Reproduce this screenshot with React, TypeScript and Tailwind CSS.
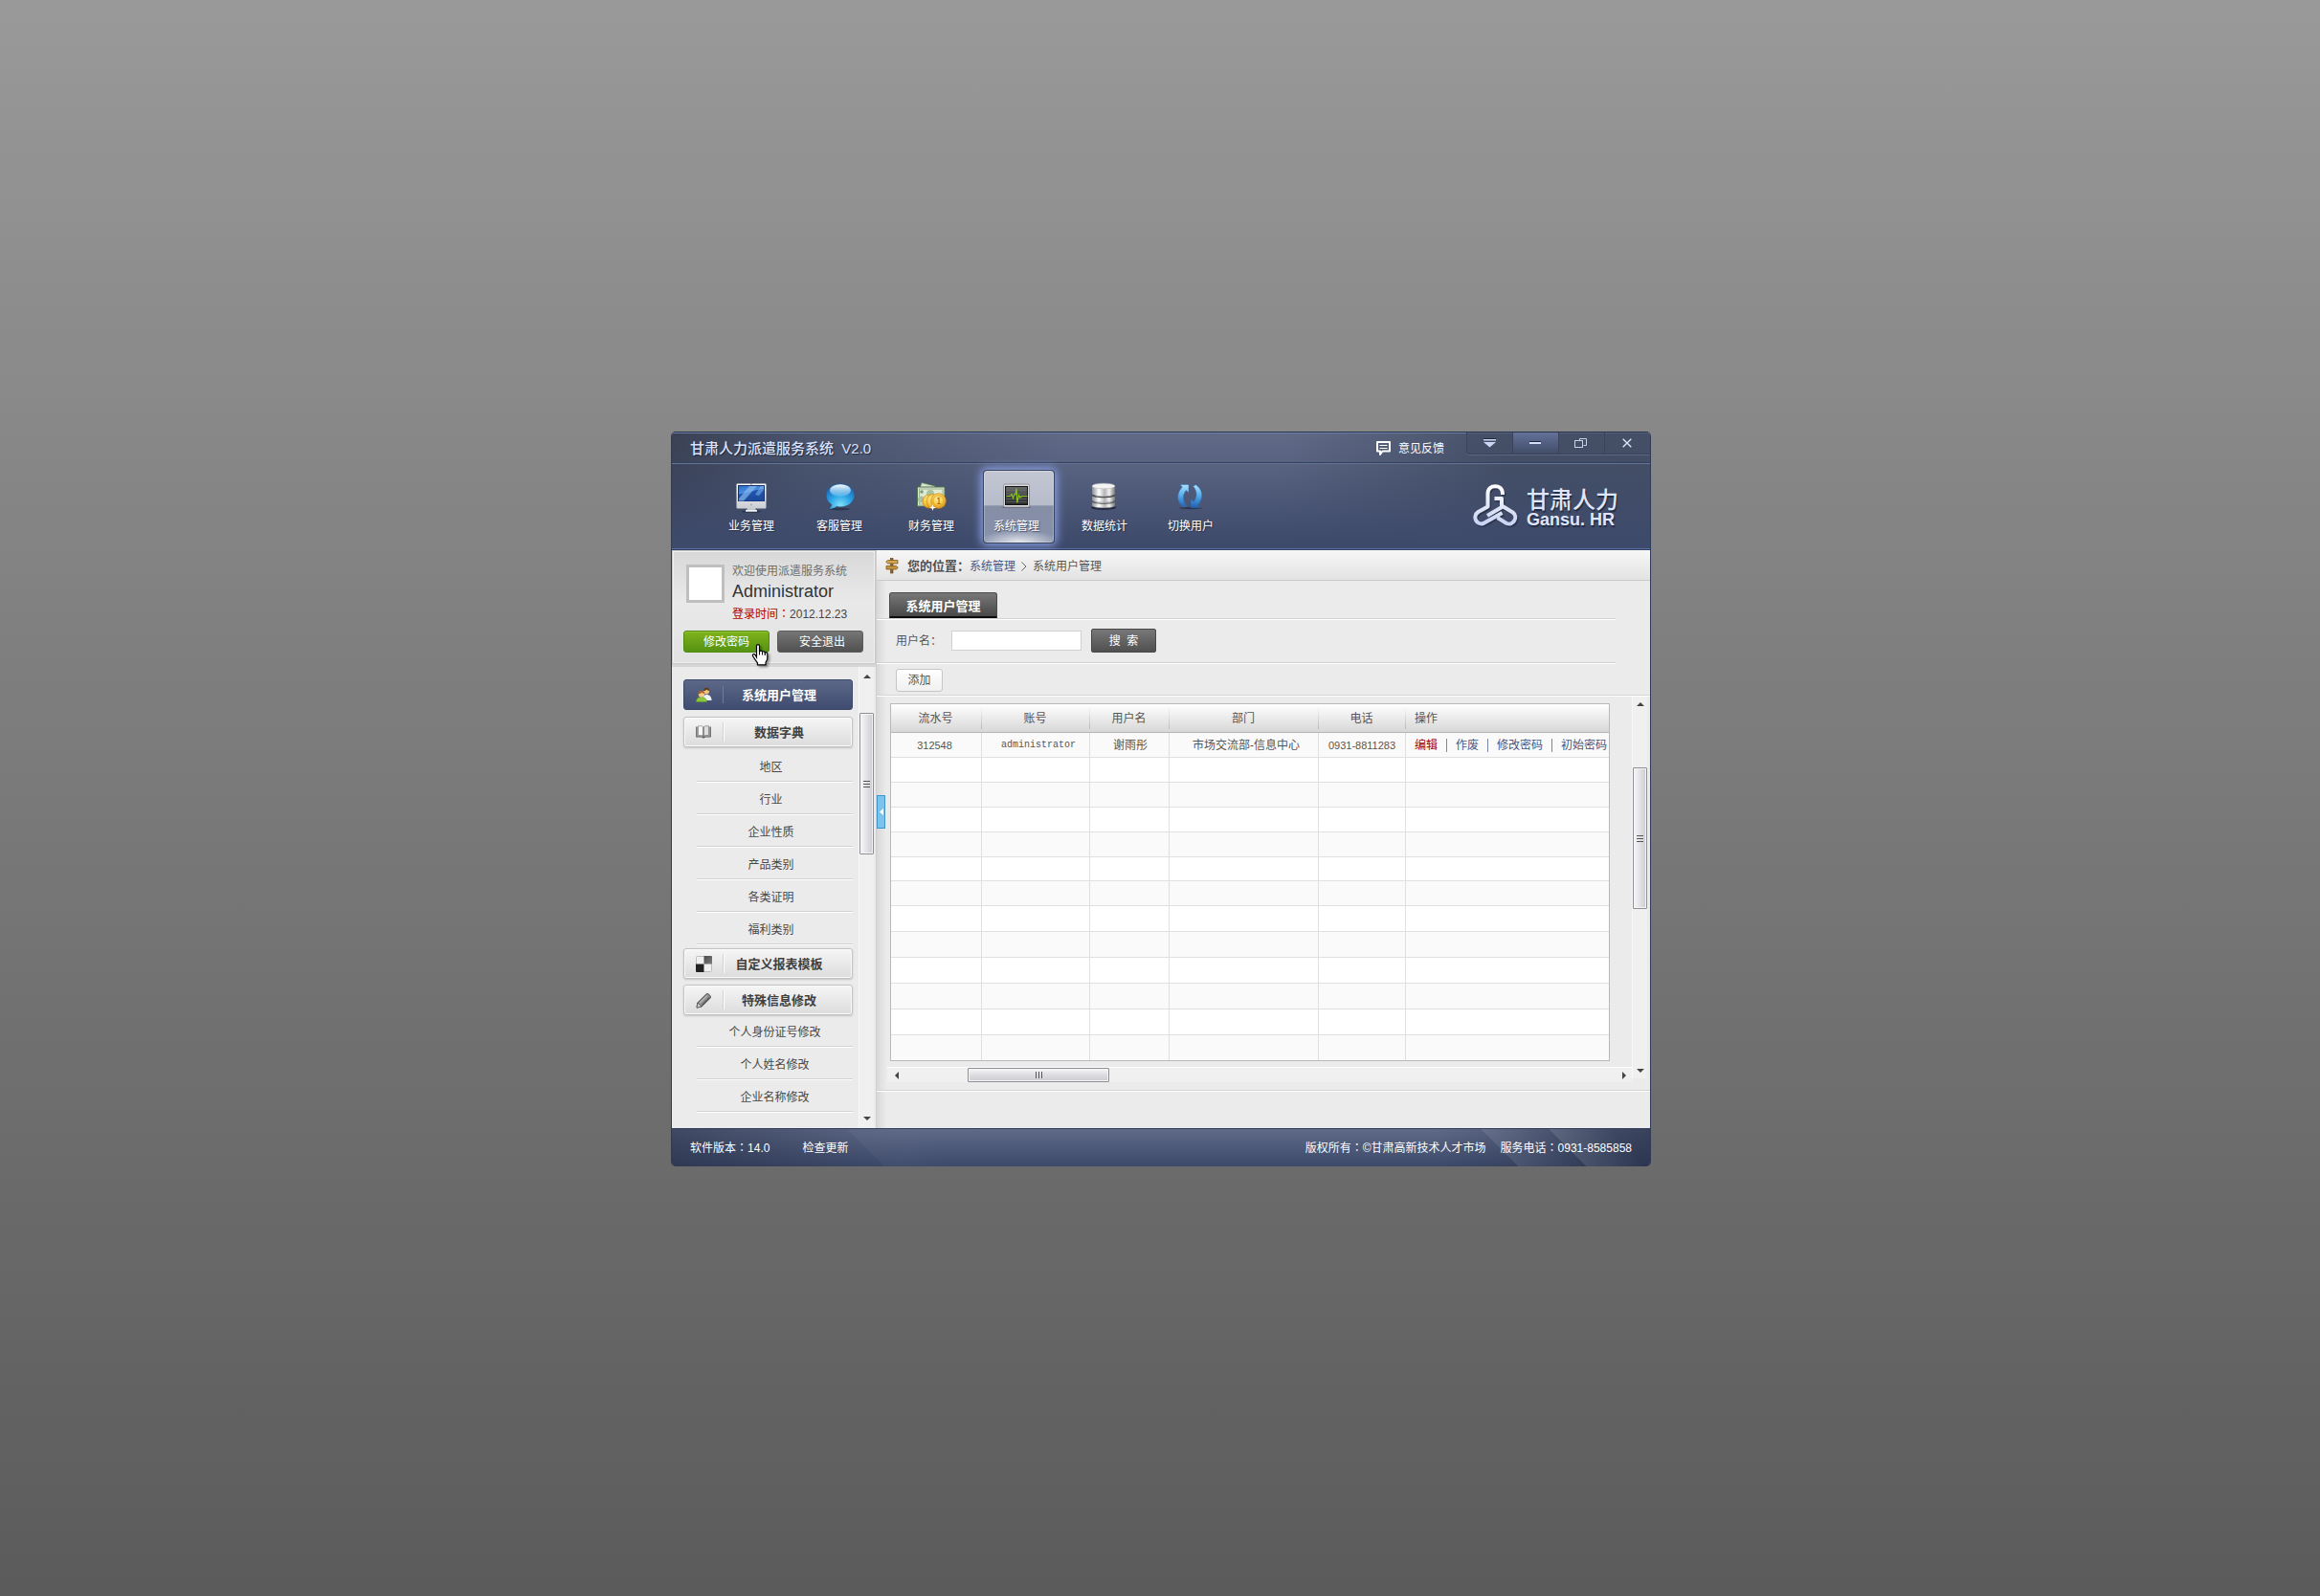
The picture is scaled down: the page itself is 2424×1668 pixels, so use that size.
import React from 'react';

function MonitorIcon() {
  return (
    <svg width="32" height="32" viewBox="0 0 32 32" aria-hidden="true">
      <defs>
        <linearGradient id="mo-s" x1="0" y1="0" x2="0.4" y2="1">
          <stop offset="0" stopColor="#2f6cc4" />
          <stop offset="0.45" stopColor="#4b8fe0" />
          <stop offset="0.5" stopColor="#1f56b0" />
          <stop offset="1" stopColor="#1c4a9c" />
        </linearGradient>
        <linearGradient id="mo-c" x1="0" y1="0" x2="0" y2="1">
          <stop offset="0" stopColor="#ffffff" />
          <stop offset="1" stopColor="#c9ccd1" />
        </linearGradient>
      </defs>
      <ellipse cx="16" cy="30.6" rx="10" ry="1.2" fill="#1c2338" opacity="0.6" />
      <path d="M12 27h8l1.5 3.5h-11z" fill="#c4c8cf" />
      <rect x="10" y="29" width="12" height="1.6" fill="#f1f2f4" />
      <rect x="0.5" y="1.5" width="31" height="26" rx="1" fill="url(#mo-c)" />
      <rect x="2" y="3" width="28" height="17" fill="#17316e" />
      <rect x="3" y="4" width="26" height="15.5" fill="url(#mo-s)" />
      <path d="M3 17L14 4h8L8 19.500H3z" fill="#8fc0f3" opacity="0.65" />
      <path d="M20 13l6-9h3v4l-5 6z" fill="#8fc0f3" opacity="0.5" />
      <circle cx="16" cy="23.500" r="1" fill="#a3a7ad" />
      <rect x="15.500" y="1.500" width="1" height="1" fill="#222" />
    </svg>
  );
}

function BubbleIcon() {
  return (
    <svg width="32" height="32" viewBox="0 0 32 32" aria-hidden="true" className="ml-[2px]">
      <defs>
        <radialGradient id="bu-b" cx="0.5" cy="0.85" r="0.8">
          <stop offset="0" stopColor="#7fe0fb" />
          <stop offset="0.5" stopColor="#2aa3e6" />
          <stop offset="1" stopColor="#1666b4" />
        </radialGradient>
        <linearGradient id="bu-h" x1="0" y1="0" x2="0" y2="1">
          <stop offset="0" stopColor="#ffffff" />
          <stop offset="1" stopColor="#8fd0f5" stopOpacity="0.4" />
        </linearGradient>
      </defs>
      <ellipse cx="15" cy="28" rx="11" ry="1.500" fill="#1c2338" opacity="0.55" />
      <path
        d="M16 1.500c8.200 0 14.500 5.200 14.500 12S24.300 25.500 16.500 25.500c-1.500 0-3-.2-4.300-.6-2.200 1.700-5 2.900-7.700 2.900 1.600-1.300 2.500-2.900 2.700-4.500C3.600 21.200 1.500 17.700 1.500 13.500c0-6.800 6.300-12 14.500-12z"
        fill="url(#bu-b)"
      />
      <ellipse cx="16" cy="8.500" rx="11" ry="6.200" fill="url(#bu-h)" />
    </svg>
  );
}

function MoneyIcon() {
  return (
    <svg width="32" height="32" viewBox="0 0 32 32" aria-hidden="true">
      <defs>
        <radialGradient id="mn-c" cx="0.45" cy="0.35" r="0.7">
          <stop offset="0" stopColor="#fff3a8" />
          <stop offset="0.55" stopColor="#f7c93f" />
          <stop offset="1" stopColor="#d8921a" />
        </radialGradient>
      </defs>
      <path d="M6 .5L20 4l-1 6L4 6z" fill="#d7e6cb" stroke="#5e7d58" strokeWidth="0.8" />
      <rect x="1.500" y="5" width="28.500" height="20" fill="#dfead3" stroke="#53724f" />
      <rect x="3.500" y="7" width="24.500" height="16" fill="none" stroke="#8aa583" strokeWidth="0.800" />
      <circle cx="5.500" cy="18" r="3.500" fill="#a9c19f" />
      <circle cx="15" cy="12" r="4" fill="#a9c19f" />
      <circle cx="6" cy="10" r="1.800" fill="#7f9c78" />
      <ellipse cx="13.500" cy="20" rx="6.500" ry="7" fill="url(#mn-c)" stroke="#c98215" strokeWidth="0.600" />
      <ellipse cx="17.500" cy="20" rx="6.500" ry="7.400" fill="url(#mn-c)" stroke="#c98215" strokeWidth="0.600" />
      <circle cx="23.500" cy="19.500" r="7.800" fill="url(#mn-c)" stroke="#c98215" strokeWidth="0.700" />
      <circle cx="23.500" cy="19.500" r="5.600" fill="none" stroke="#e0a023" strokeWidth="0.900" />
      <path d="M22.300 17.200l1.700-1v6.300m-1.800 0h3.600" fill="none" stroke="#b3730d" strokeWidth="1.200" />
      <path d="M17.500 23l.8 2.700 2.700.8-2.700.8-.8 2.700-.8-2.700-2.700-.8 2.700-.8z" fill="#fff" />
    </svg>
  );
}

function PulseIcon() {
  return (
    <svg width="32" height="32" viewBox="0 0 32 32" aria-hidden="true" className="mr-[4px]">
      <defs>
        <linearGradient id="pu-s" x1="0" y1="0" x2="0" y2="1">
          <stop offset="0" stopColor="#6a6c6d" />
          <stop offset="0.5" stopColor="#434546" />
          <stop offset="1" stopColor="#2b2c2d" />
        </linearGradient>
      </defs>
      <rect x="1.500" y="25" width="29" height="2" rx="1" fill="#4a5268" opacity="0.700" />
      <rect x="2.500" y="2" width="27" height="24" rx="1.500" fill="#d9dadb" stroke="#85878d" strokeWidth="0.800" />
      <rect x="4.500" y="4.500" width="23" height="19" fill="url(#pu-s)" stroke="#141414" />
      <path d="M5 8.500h22M5 12h22M5 17.500h22M5 20.500h22" stroke="#6b6e6f" strokeWidth="0.600" />
      <path
        d="M5.500 14.500h4l1.500-2 1.500 4 1.500-4h1l1-6 .8 15 1.700-8 1.500 2.500 1.500-1.500h6"
        fill="none"
        stroke="#86c31d"
        strokeWidth="1.200"
      />
    </svg>
  );
}

function DatabaseIcon() {
  return (
    <svg width="32" height="32" viewBox="0 0 32 32" aria-hidden="true" className="mr-[3px]">
      <defs>
        <linearGradient id="db-b" x1="0" y1="0" x2="1" y2="0">
          <stop offset="0" stopColor="#8d8d8d" />
          <stop offset="0.3" stopColor="#ffffff" />
          <stop offset="0.55" stopColor="#b5b5b5" />
          <stop offset="0.75" stopColor="#f2f2f2" />
          <stop offset="1" stopColor="#767676" />
        </linearGradient>
      </defs>
      <ellipse cx="16" cy="26.500" rx="13" ry="2.500" fill="#141a2b" opacity="0.700" />
      <g transform="translate(1 0)">
        <path d="M3 20.500v4c0 3 24 3 24 0v-4z" fill="url(#db-b)" />
        <path d="M3 20.500c0 3 24 3 24 0v-1c0 3-24 3-24 0z" fill="#4c4c4c" />
        <path d="M3 14v4.500c0 3 24 3 24 0V14z" fill="url(#db-b)" />
        <path d="M3 14c0 3 24 3 24 0v-1.500c0 3-24 3-24 0z" fill="#4c4c4c" />
        <path d="M3 7v5c0 3 24 3 24 0V7z" fill="url(#db-b)" />
        <path d="M3 7c0 3 24 3 24 0V4c0 3-24 3-24 0z" fill="url(#db-b)" />
        <ellipse cx="15" cy="4" rx="12" ry="2.800" fill="#f4f4f4" stroke="#bdbdbd" strokeWidth="0.600" />
      </g>
    </svg>
  );
}

function SwitchIcon() {
  return (
    <svg width="32" height="32" viewBox="0 0 32 32" aria-hidden="true" className="mr-[3px]">
      <defs>
        <linearGradient id="sw-l" x1="0" y1="0" x2="0" y2="1">
          <stop offset="0" stopColor="#a9e4ff" />
          <stop offset="0.550" stopColor="#4ba2e4" />
          <stop offset="1" stopColor="#1f5fb0" />
        </linearGradient>
      </defs>
      <ellipse cx="17" cy="27" rx="12" ry="1.200" fill="#1b2237" opacity="0.600" />
      <path
        d="M6 2.500h9V11l-2.700-2.400C8.200 13.500 8.700 20 13 25l-3 1.300C2.500 21.500 1.500 12 8.300 5z"
        fill="url(#sw-l)"
        stroke="#2f6fb8"
        strokeWidth="0.500"
      />
      <path
        d="M26.500 26.500h-9V18l2.700 2.400C24.300 15.500 23.800 9 19.500 4l3-1.300C30 7.500 31 17 24.200 24z"
        fill="url(#sw-l)"
        stroke="#2f6fb8"
        strokeWidth="0.500"
      />
    </svg>
  );
}

function LogoMark() {
  return (
    <svg width="48" height="46" viewBox="0 0 48 46" aria-hidden="true">
      <defs>
        <linearGradient id="lg" x1="0" y1="0" x2="0" y2="46" gradientUnits="userSpaceOnUse">
          <stop offset="0" stopColor="#ffffff" />
          <stop offset="1" stopColor="#c3cff2" />
        </linearGradient>
      </defs>
      {[0, 1].map((layer) => (
        <g
          key={layer}
          fill="none"
          stroke={layer === 0 ? '#1d2438' : 'url(#lg)'}
          opacity={layer === 0 ? 0.6 : 1}
          strokeWidth="4"
          strokeLinejoin="round"
          transform={layer === 0 ? 'translate(1.200 1.600)' : undefined}
        >
          <path d="M31 11V10C31 -.5 15.500 -.5 15.500 10V23.500L5.500 29C-1 33.500 3.500 43.500 11 41L30.500 30" />
          <path d="M22.500 15H30V22.500L41.500 29.500C48 34 42 44 35 41L25.500 35" />
          <path d="M15 33L31 23.500" />
        </g>
      ))}
    </svg>
  );
}

function SignpostIcon() {
  return (
    <svg width="14" height="17" viewBox="0 0 14 17" aria-hidden="true">
      <rect x="5.500" y="0.500" width="2.500" height="15.500" fill="#8a6630" stroke="#5d4218" strokeWidth="0.600" />
      <path d="M2.500 2.500h10.500v3.500H2.500L.7 4.250z" fill="#d2a654" stroke="#80591c" strokeWidth="0.800" />
      <path d="M1 8.500h10.500l1.800 1.750-1.800 1.750H1z" fill="#c3943f" stroke="#80591c" strokeWidth="0.800" />
    </svg>
  );
}

function UsersIcon() {
  return (
    <svg width="17" height="16" viewBox="0 0 17 16" aria-hidden="true">
      <path d="M7 14c0-4 2-6 4.500-6s5 2 5 6z" fill="#eef1f5" />
      <circle cx="11" cy="4.500" r="3" fill="#f0c27c" />
      <path d="M8 4c0-4 6-4.500 6.200 0-1.500-.3-2.500-1-3-1.500C10.500 3.500 9.500 4 8 4z" fill="#5b3716" />
      <path d="M.5 15.500c0-3.500 2-5 5-5s6 1.500 6 5z" fill="#8cc63c" stroke="#5f9420" strokeWidth="0.500" />
      <circle cx="6" cy="7.500" r="3.200" fill="#f3c988" />
      <path d="M2.700 7.500c-.2-5 6.700-4.800 6.600-.5-1.500 0-2.500-.8-3-1.500-.8 1-2 1.800-3.600 2z" fill="#a8622a" />
    </svg>
  );
}

function BookIcon() {
  return (
    <svg width="16" height="14" viewBox="0 0 16 14" aria-hidden="true">
      <path d="M.8 1.500v10.500h5.500L8 13l1.700-1h5.500V1.500" fill="#bdbdbd" stroke="#5c5c5c" strokeWidth="1.200" />
      <path d="M2.500.8h3.200C7 .8 8 1.500 8 2.500v9c-.6-.7-1.500-1-2.500-1h-3z" fill="#f6f6f6" stroke="#777" strokeWidth="0.600" />
      <path d="M13.500.8h-3.200C9 .8 8 1.500 8 2.500v9c.6-.7 1.500-1 2.500-1h3z" fill="#dedede" stroke="#6a6a6a" strokeWidth="0.600" />
      <path d="M8 2v10" stroke="#555" strokeWidth="0.800" />
    </svg>
  );
}

function CheckerIcon() {
  return (
    <svg width="17" height="17" viewBox="0 0 17 17" aria-hidden="true">
      <defs>
        <linearGradient id="ck" x1="0" y1="0" x2="1" y2="1">
          <stop offset="0" stopColor="#4a4a4a" />
          <stop offset="1" stopColor="#7d7d7d" />
        </linearGradient>
      </defs>
      <rect x="0.500" y="0.500" width="16" height="16" rx="1" fill="#f0f0f0" stroke="#bcbcbc" />
      <path d="M8.500 0H16a1 1 0 011 1v7.500H8.500z" fill="url(#ck)" />
      <path d="M0 8.500h8.500V17H1a1 1 0 01-1-1z" fill="#222" />
    </svg>
  );
}

function PencilIcon() {
  return (
    <svg width="17" height="17" viewBox="0 0 17 17" aria-hidden="true">
      <path d="M1 16l.8-5L11 1.800C12.500.3 16.700 4.300 15.200 6L6 15.200z" fill="#8c8c8c" stroke="#4d4d4d" />
      <path d="M4 11.500l8-8" stroke="#b5b5b5" strokeWidth="1.500" />
      <path d="M6.500 13.500l8-8" stroke="#5c5c5c" strokeWidth="1.200" />
      <path d="M2 11l4 4-5 1.200z" fill="#d0d0d0" stroke="#4d4d4d" strokeWidth="0.700" />
    </svg>
  );
}

function HandCursor() {
  return (
    <svg width="18" height="23" viewBox="0 0 18 23" aria-hidden="true" className="drop-shadow-[2px_2px_1px_rgba(0,0,0,0.35)]">
      <path
        d="M5.500 14V2.200C5.500.2 8.500.2 8.500 2.200V8c.3-1.400 3-1.200 3 .5.500-1.200 2.800-.9 2.800.8.6-1 2.500-.6 2.500 1v5c0 2-1.800 3-1.800 4.500v2H6.500v-2c-1.500-2-3-4-5-7.300-.6-1.500 1.300-2.500 2.500-1.200z"
        fill="#fff"
        stroke="#000"
        strokeWidth="1.200"
      />
      <path d="M8.500 8v3.500M11.500 8.500v3M14.300 9.500v2.500" stroke="#000" />
    </svg>
  );
}

function Colon() {
  return <span className="font-['Noto_Sans_CJK_TC',sans-serif] leading-none">：</span>;
}

const navItems = [
  { label: '业务管理', icon: <MonitorIcon /> },
  { label: '客服管理', icon: <BubbleIcon /> },
  { label: '财务管理', icon: <MoneyIcon /> },
  { label: '系统管理', icon: <PulseIcon />, active: true },
  { label: '数据统计', icon: <DatabaseIcon /> },
  { label: '切换用户', icon: <SwitchIcon /> },
];

function WindowControls() {
  const cell = 'flex h-[22px] w-12 items-center justify-center border-l border-[#3b445a] pr-[2px]';
  return (
    <div className="flex self-start rounded-bl-[4px] border-b border-l border-[#3a4359] bg-[#454f66]/60 shadow-[0_1px_0_#5c6780]">
      <button aria-label="菜单" className="flex h-[22px] w-[47px] items-center justify-center">
        <svg width="13" height="10" viewBox="0 0 13 10" aria-hidden="true">
          <path d="M0 0h13v2H0z" fill="#1f2638" />
          <path d="M0 1h13v1.500H0zM0 4h13L6.500 9.500z" fill="#ccd6f5" />
        </svg>
      </button>
      <button aria-label="最小化" className={`${cell} bg-linear-to-b from-[#64729a] to-[#424d69]`}>
        <svg width="12" height="4" viewBox="0 0 12 4" aria-hidden="true">
          <path d="M0 0h12v1H0z" fill="#1f2638" />
          <path d="M0 1h12v2H0z" fill="#d5dffb" />
        </svg>
      </button>
      <button aria-label="还原" className={cell}>
        <svg width="14" height="12" viewBox="0 0 14 12" fill="none" stroke="#c6d1ee" aria-hidden="true">
          <path d="M5.500 3V1.500h7v7H9.500" />
          <rect x="0.500" y="3.500" width="8" height="7" />
        </svg>
      </button>
      <button aria-label="关闭" className={cell}>
        <svg width="10" height="10" viewBox="0 0 10 10" aria-hidden="true">
          <path d="M.7.7l8.600 8.600M9.300.7L.7 9.300" stroke="#dbe3fb" strokeWidth="1.400" />
        </svg>
      </button>
    </div>
  );
}

function Header() {
  return (
    <header className="border-b border-[#2f3e63] bg-[linear-gradient(to_bottom,rgba(60,72,104,0)_0%,rgba(60,72,104,0.25)_30%,#3e4a6b_95%),linear-gradient(100deg,#3a4154_0%,#4b556d_14%,#616b88_40%,#616b88_62%,#465066_84%,#454f65_100%)]">
      <div className="flex h-[33px] items-center border-t border-b border-t-[#27334b] border-b-[#353f57] shadow-[inset_0_1px_0_#6c80a6,0_1px_0_#65749a]">
        <h1 className="pt-[3px] pl-[19px] text-[15px] font-medium whitespace-pre text-[#dbe2fd] [text-shadow:1px_1px_1px_#20283c]">
          甘肃人力派遣服务系统{'  '}V2.0
        </h1>
        <div className="ml-auto flex items-center gap-[7px] pt-[2px] pr-[23px] text-white">
          <svg width="17" height="16" viewBox="0 0 17 16" aria-hidden="true">
            <path d="M2 1h13v9.500H7.500L5 14v-3.500H2z" fill="none" stroke="#fff" strokeWidth="2" strokeLinejoin="round" />
            <path d="M4.500 4.500h8M4.500 7.500h8" stroke="#fff" />
          </svg>
          <a href="#feedback" className="text-xs">
            意见反馈
          </a>
        </div>
        <WindowControls />
      </div>
      <div className="flex items-start border-b border-[#5c6f9c] pt-[7px] pb-[5px] pl-[39px]">
        <nav className="grid grid-cols-[88px_96px_96px_86px_94px_86px] justify-items-center">
          {navItems.map((item) => (
            <button
              key={item.label}
              className={
                item.active
                  ? 'flex h-[77px] w-[75px] flex-col items-center rounded-[4px] border border-[#39435e] bg-[radial-gradient(60%_18%_at_50%_100%,rgba(255,255,255,0.8)_0%,rgba(255,255,255,0)_100%),linear-gradient(to_bottom,#c3c7d3_0%,#b7bccb_48%,#858ea5_49%,#8791ab_100%)] pt-3 text-xs leading-4 text-white shadow-[inset_0_0_0_1px_rgba(255,255,255,0.25),0_0_10px_2px_#8ca4ea]'
                  : 'flex h-[77px] w-[74px] flex-col items-center pt-[13px] text-xs leading-4 text-white'
              }
            >
              {item.icon}
              <span
                className={
                  item.active
                    ? 'mt-[6px] mr-[4px] [text-shadow:1px_1px_1px_rgba(20,28,50,0.6)]'
                    : 'mt-[6px] [text-shadow:1px_1px_1px_rgba(20,28,50,0.6)]'
                }
              >
                {item.label}
              </span>
            </button>
          ))}
        </nav>
        <div className="mt-[15px] mr-[33px] ml-auto flex gap-2">
          <LogoMark />
          <div className="text-[#dfe6fb] [text-shadow:1px_2px_1px_#222b42]">
            <div className="mt-[5px] text-2xl leading-6 font-medium">甘肃人力</div>
            <div className="text-lg leading-4 font-bold">Gansu. HR</div>
          </div>
        </div>
      </div>
    </header>
  );
}

function VScroll({ arrow, lead }: { arrow: string; lead: string }) {
  return (
    <div className="flex w-[15px] flex-1 flex-col bg-[#f0f0f0] shadow-[-1px_0_0_#f8f8f8]">
      <button aria-label="向上滚动" className={`${arrow} flex items-center justify-center`}>
        <svg width="8" height="4" viewBox="0 0 8 4" aria-hidden="true">
          <path d="M0 4h8L4 0z" fill="#444" />
        </svg>
      </button>
      <div className={lead} />
      <div className="flex h-[148px] flex-col items-center justify-center gap-[2px] rounded-[1px] border border-[#8e8e93] bg-linear-to-r from-[#f7f7f9] via-[#e2e2e6] to-[#cbcbd1] shadow-[inset_0_0_0_1px_#f4f4f6]">
        <i className="h-px w-[7px] bg-[#555]" />
        <i className="h-px w-[7px] bg-[#555]" />
        <i className="h-px w-[7px] bg-[#555]" />
      </div>
      <div className="flex-1" />
      <button aria-label="向下滚动" className={`${arrow} flex items-center justify-center`}>
        <svg width="8" height="4" viewBox="0 0 8 4" aria-hidden="true">
          <path d="M0 0h8L4 4z" fill="#444" />
        </svg>
      </button>
    </div>
  );
}

function HScroll() {
  return (
    <div className="mt-[7px] mr-px ml-[11px] flex h-[15px] bg-[#f0f0f0] shadow-[0_-1px_0_#fff]">
      <button aria-label="向左滚动" className="flex w-5 items-center justify-center">
        <svg width="4" height="8" viewBox="0 0 4 8" aria-hidden="true">
          <path d="M4 0v8L0 4z" fill="#444" />
        </svg>
      </button>
      <div className="w-16" />
      <div className="flex w-[148px] items-center justify-center gap-[2px] rounded-[1px] border border-[#8e8e93] bg-linear-to-b from-[#f7f7f9] via-[#dddde1] to-[#cbcbd1] shadow-[inset_0_0_0_1px_#f4f4f6]">
        <i className="h-[7px] w-px bg-[#555]" />
        <i className="h-[7px] w-px bg-[#555]" />
        <i className="h-[7px] w-px bg-[#555]" />
      </div>
      <div className="flex-1" />
      <button aria-label="向右滚动" className="flex w-4 items-center justify-center">
        <svg width="4" height="8" viewBox="0 0 4 8" aria-hidden="true">
          <path d="M0 0v8l4-4z" fill="#444" />
        </svg>
      </button>
    </div>
  );
}

function MenuButton({ icon, label, active }: { icon: React.ReactNode; label: string; active?: boolean }) {
  return (
    <button
      className={
        active
          ? 'flex h-8 w-full items-center rounded-[3px] border border-[#3a4766] bg-linear-to-b from-[#5d6888] to-[#3f4c70] text-[13px] font-bold text-white'
          : 'flex h-8 w-full items-center rounded-[3px] border border-[#c3c3c3] bg-linear-to-b from-[#f6f6f6] to-[#dcdcdc] text-[13px] font-bold text-[#404040] shadow-[inset_0_0_0_1px_#fafafa,0_1px_2px_#c4c4c4]'
      }
    >
      <span
        className={
          active
            ? 'flex h-[18px] w-[41px] items-center justify-center border-r border-[#6d7ca4]'
            : 'flex h-5 w-[41px] items-center justify-center border-r border-[#d0d0d0] shadow-[1px_0_0_#fff]'
        }
      >
        {icon}
      </span>
      <span className="flex-1 pt-[2px] pr-[18px] text-center">{label}</span>
    </button>
  );
}

function SubMenu({ items, pad }: { items: string[]; pad: string }) {
  return (
    <ul className="ml-[14px] text-xs text-[#484848]">
      {items.map((item) => (
        <li key={item} className="mb-px h-[33px] border-b border-[#d2d2d2] shadow-[0_1px_0_#fff]">
          <a href="#menu" className={`${pad} block text-center leading-9`}>
            {item}
          </a>
        </li>
      ))}
    </ul>
  );
}

function Sidebar() {
  return (
    <aside className="flex w-[214px] shrink-0 flex-col border-r border-[#cfcfcf] bg-[#ebebeb]">
      <section className="border border-[#c9c9c9] bg-linear-to-b from-[#d8d8d8] via-[#e9e9e9] via-45% to-[#e2e2e2] px-[11px] pt-[13px] pb-[11px] shadow-[inset_0_0_0_1px_#f0f0f0]">
        <div className="flex gap-2">
          <div className="mt-px ml-[3px] size-10 border-[3px] border-[#bfbfbf] bg-white" />
          <div>
            <p className="text-xs leading-4 text-[#6e6e6e]">欢迎使用派遣服务系统</p>
            <p className="mt-px text-lg leading-6 text-[#333]">Administrator</p>
            <p className="text-xs leading-6 text-[#444]">
              <span className="text-[#b00000]">
                登录时间
                <Colon />
              </span>
              2012.12.23
            </p>
          </div>
        </div>
        <div className="mt-[5px] flex gap-2 text-xs text-white">
          <div className="relative">
            <button className="h-[23px] w-[90px] rounded-[3px] border border-[#4f8a12] bg-linear-to-b from-[#80b31d] to-[#559312] shadow-[inset_0_1px_0_#93c03a]">
              修改密码
            </button>
            <div className="pointer-events-none absolute top-[14px] left-[71px]">
              <HandCursor />
            </div>
          </div>
          <button className="h-[23px] w-[90px] rounded-[3px] border border-[#5c5c5c] bg-linear-to-b from-[#767676] to-[#515151] pl-1">
            安全退出
          </button>
        </div>
      </section>
      <div className="h-[3px] bg-[#d6d6d6]" />
      <div className="flex flex-1">
        <div className="flex-1 pt-[13px] pr-[7px] pl-3">
          <MenuButton active icon={<UsersIcon />} label="系统用户管理" />
          <div className="mt-[7px]">
            <MenuButton icon={<BookIcon />} label="数据字典" />
          </div>
          <div className="pt-[3px]">
            <SubMenu pad="pr-2" items={['地区', '行业', '企业性质', '产品类别', '各类证明', '福利类别']} />
          </div>
          <div className="mt-1">
            <MenuButton icon={<CheckerIcon />} label="自定义报表模板" />
          </div>
          <div className="mt-[6px]">
            <MenuButton icon={<PencilIcon />} label="特殊信息修改" />
          </div>
          <SubMenu pad="pr-0" items={['个人身份证号修改', '个人姓名修改', '企业名称修改']} />
        </div>
        <div className="mr-[2px] flex">
          <VScroll arrow="h-5" lead="h-7" />
        </div>
      </div>
    </aside>
  );
}

const headers = ['流水号', '账号', '用户名', '部门', '电话'];

const rowHeights = [
  'h-[26px]', 'h-[26px]', 'h-[26px]', 'h-[26px]', 'h-[25px]', 'h-[26px]',
  'h-[27px]', 'h-[27px]', 'h-[27px]', 'h-[27px]', 'h-[27px]', 'h-[26px]',
];

function UserTable() {
  const td = 'border-r border-b border-[#e0e0e0] p-0';
  const sep = 'h-[14px] w-px bg-[#7c87a8]';
  return (
    <div className="mr-6 ml-[14px] border border-[#b9b9b9]">
      <table className="w-full table-fixed border-separate border-spacing-0 bg-white text-xs text-[#555]">
        <colgroup>
          <col className="w-[95px]" />
          <col className="w-[113px]" />
          <col className="w-[83px]" />
          <col className="w-[156px]" />
          <col className="w-[91px]" />
          <col />
        </colgroup>
        <thead>
          <tr className="h-[30px] bg-linear-to-b from-white to-[#d6d6d6]">
            {headers.map((h) => (
              <th
                key={h}
                className="border-b border-[#b5b5b5] bg-[linear-gradient(#f4f4f4,#b9b9b9)] bg-size-[1px_22px] bg-right bg-no-repeat p-0 pt-px pr-[2px] font-normal"
              >
                {h}
              </th>
            ))}
            <th className="border-b border-[#b5b5b5] p-0 pt-px pl-[9px] text-left font-normal">操作</th>
          </tr>
        </thead>
        <tbody>
          <tr className="h-[26px] bg-[#fafafa] text-center">
            <td className={`${td} pt-px pr-[3px] text-[11px]`}>312548</td>
            <td className={`${td} pt-px pl-[6px] font-['Liberation_Mono',monospace] text-[10px]`}>administrator</td>
            <td className={`${td} pt-px pl-[2px]`}>谢雨彤</td>
            <td className={`${td} pt-px pl-[5px]`}>市场交流部-信息中心</td>
            <td className={`${td} pt-px text-[11px]`}>0931-8811283</td>
            <td className="border-b border-[#e0e0e0] p-0 pt-px">
              <div className="flex items-center gap-[9px] pl-[9px] text-[#475683]">
                <a href="#edit" className="text-[#a80000]">编辑</a>
                <i className={sep} />
                <a href="#void">作废</a>
                <i className={sep} />
                <a href="#password">修改密码</a>
                <i className={sep} />
                <a href="#reset" className="whitespace-nowrap">初始密码</a>
              </div>
            </td>
          </tr>
          {rowHeights.map((h, i) => (
            <tr key={i} className={i % 2 === 0 ? `${h} bg-white` : `${h} bg-[#fafafa]`}>
              {headers.map((name) => (
                <td key={name} className={i === 11 ? 'border-r border-[#e0e0e0] p-0' : td} />
              ))}
              <td className={i === 11 ? 'p-0' : 'border-b border-[#e0e0e0] p-0'} />
            </tr>
          ))}
        </tbody>
      </table>
    </div>
  );
}

function Main() {
  return (
    <main className="relative flex min-w-0 flex-1 flex-col bg-[#ebebeb] bg-[linear-gradient(to_right,#d8d8d8,#ebebeb)] bg-size-[10px_100%] bg-no-repeat">
      <div className="flex h-8 items-center border-b border-[#cbcbcb] bg-linear-to-b from-[#f7f7f7] to-[#e3e3e3] pt-[2px] pl-[9px] text-xs text-[#555]">
        <SignpostIcon />
        <strong className="ml-[9px] text-[13px] text-[#505050]">您的位置：</strong>
        <a href="#system" className="text-[#475786]">
          系统管理
        </a>
        <svg width="6" height="10" viewBox="0 0 6 10" className="mx-[6px]" aria-hidden="true">
          <path d="M.5.5L5 5 .5 9.500" fill="none" stroke="#666" />
        </svg>
        <span>系统用户管理</span>
      </div>
      <div className="mr-9 flex border-b border-[#d2d2d2] pt-3 pl-[13px] shadow-[0_1px_0_#fff]">
        <button className="h-[27px] w-[113px] rounded-t-[3px] border border-b-2 border-[#4a4a4a] border-b-[#0c0c0c] bg-linear-to-b from-[#787878] to-[#484848] pt-1 text-[13px] leading-5 font-bold text-white">
          系统用户管理
        </button>
      </div>
      <form className="mr-9 flex h-[46px] items-center border-b border-[#d2d2d2] pl-5 text-xs text-[#555] shadow-[0_1px_0_#fff]">
        <label htmlFor="username" className="w-[58px]">
          用户名：
        </label>
        <input id="username" className="h-[21px] w-[136px] border border-[#d0d0d0] bg-white px-1 outline-none" />
        <button
          type="button"
          className="ml-[10px] h-[25px] w-[68px] rounded-[2px] border border-[#484848] bg-linear-to-b from-[#787878] to-[#505050] whitespace-pre text-white"
        >
          搜{'  '}索
        </button>
      </form>
      <div className="flex h-[34px] items-center border-b border-[#d4d4d4] pl-5 shadow-[0_1px_0_#fff]">
        <button className="mt-[2px] h-6 w-[49px] rounded-[3px] border border-[#c6c6c6] bg-linear-to-b from-white to-[#f0f0f0] text-xs text-[#555]">
          添加
        </button>
      </div>
      <div className="flex border-b border-[#d2d2d2] shadow-[0_1px_0_#fff]">
        <div className="min-w-0 flex-1 pt-2 pb-2">
          <UserTable />
          <HScroll />
        </div>
        <div className="mr-[3px] mb-3 flex pt-px">
          <VScroll arrow="h-4" lead="h-[58px]" />
        </div>
      </div>
      <div className="flex-1" />
      <button
        aria-label="收起侧栏"
        className="absolute top-[256px] left-0 flex h-[35px] w-[9px] items-center justify-center border border-[#3d97cd] bg-[#7cc2ea]"
      >
        <svg width="4" height="7" viewBox="0 0 4 7" aria-hidden="true">
          <path d="M4 0v7L0 3.500z" fill="#fff" />
        </svg>
      </button>
    </main>
  );
}

function Footer() {
  return (
    <footer className="flex h-10 items-center border-t border-[#313d5a] bg-[linear-gradient(45deg,rgba(255,255,255,0)_83.300%,rgba(255,255,255,0.09)_83.400%,rgba(255,255,255,0)_90%,rgba(255,255,255,0.11)_90.100%,rgba(255,255,255,0)_96%),linear-gradient(45deg,rgba(255,255,255,0)_20.900%,rgba(255,255,255,0.03)_21%,rgba(255,255,255,0)_28%),linear-gradient(to_right,rgba(32,40,62,0.5)_0%,rgba(32,40,62,0)_24%,rgba(32,40,62,0)_78%,rgba(32,40,62,0.6)_100%),linear-gradient(to_bottom,#5f6a88,#3c4969)] px-[19px] text-xs text-white">
      <span>
        软件版本
        <Colon />
        14.0
      </span>
      <a href="#update" className="ml-[34px]">
        检查更新
      </a>
      <span className="ml-auto">
        版权所有
        <Colon />
        ©甘肃高新技术人才市场
      </span>
      <span className="ml-[15px]">
        服务电话
        <Colon />
        0931-8585858
      </span>
    </footer>
  );
}

export default function App() {
  return (
    <div className="flex min-h-screen items-center justify-center bg-linear-to-b from-[#999999] to-[#5b5b5b] pt-[2px] pl-[2px] font-['Liberation_Sans','Noto_Sans_CJK_SC',sans-serif]">
      <div className="w-full max-w-[1024px] overflow-hidden rounded-[5px] border-x border-[#2e3b59]">
        <Header />
        <div className="flex min-h-[604px]">
          <Sidebar />
          <Main />
        </div>
        <Footer />
      </div>
    </div>
  );
}
